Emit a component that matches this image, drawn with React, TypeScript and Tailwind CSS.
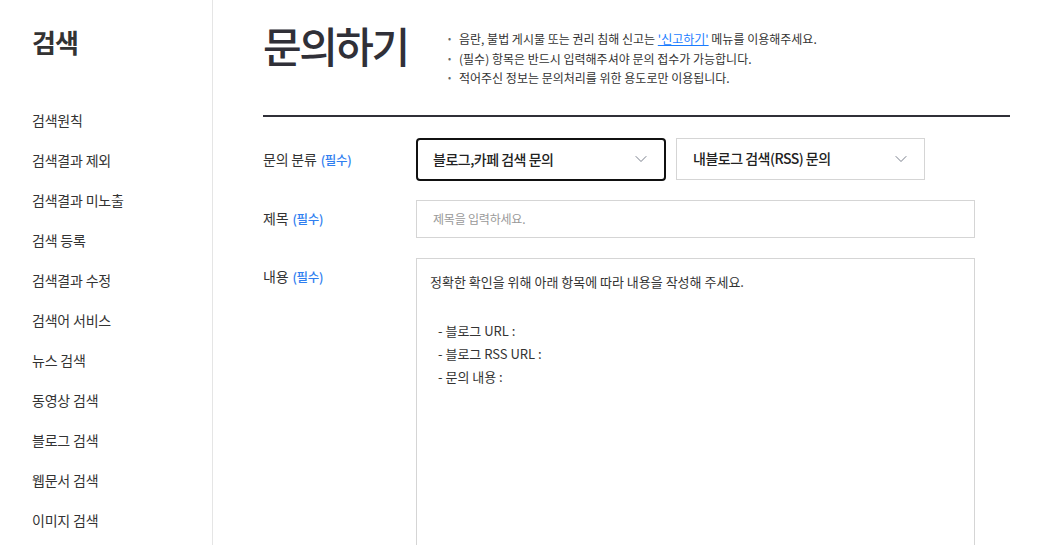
import { ChevronDown } from 'lucide-react'

const menu = [
    '검색원칙',
    '검색결과 제외',
    '검색결과 미노출',
    '검색 등록',
    '검색결과 수정',
    '검색어 서비스',
    '뉴스 검색',
    '동영상 검색',
    '블로그 검색',
    '웹문서 검색',
    '이미지 검색',
]

function Required() {
    return <span className="ml-1 text-[12.5px] font-medium tracking-[-0.3px] text-[#2f7ef0]">(필수)</span>
}

function Select({ label, active }: { label: string; active?: boolean }) {
    return (
        <div
            className={
                active
                    ? 'flex h-[43px] w-[250px] items-center justify-between rounded-[4px] border-2 border-[#111] pl-[15px] pr-[13px]'
                    : 'flex h-[42px] w-[249px] items-center justify-between border border-[#d5d5d5] pl-[16px] pr-[13px]'
            }
        >
            <span className="text-[14px] font-medium tracking-[-0.5px] text-[#222]">{label}</span>
            <ChevronDown className="h-[20px] w-[20px] text-[#6b7280]" strokeWidth={1.1} />
        </div>
    )
}

export default function App() {
    return (
        <div
            className="flex h-[545px] w-full overflow-hidden bg-white text-[#333]"
            style={{ fontFamily: '"Noto Sans CJK KR", "Noto Sans", sans-serif' }}
        >
            <aside className="w-[213px] shrink-0 border-r border-[#e5e5e5] pl-[32px] pt-[22px]">
                <h2 className="text-[26px] font-bold tracking-[-1px] text-[#333]">검색</h2>
                <ul className="mt-[49px]">
                    {menu.map((item) => (
                        <li key={item} className="h-[40px] text-[14px] tracking-[-0.2px] text-[#333]">
                            {item}
                        </li>
                    ))}
                </ul>
            </aside>

            <main className="w-[747px] shrink-0 pl-[50px] pt-[17px]">
                <div className="w-[747px]">
                    <div className="flex items-start border-b-2 border-[#303038] pb-[27px]">
                        <h1 className="w-[185px] text-[42px] font-medium leading-[56px] tracking-[-2.5px] text-[#303038]">
                            문의하기
                        </h1>
                        <ul className="mt-[12px] text-[12px] leading-[19.5px] tracking-[0px] text-[#333]">
                            <li className="flex">
                                <span className="w-[11px] text-[9px] text-[#666]">•</span>
                                음란, 불법 게시물 또는 권리 침해 신고는&nbsp;
                                <a className="text-[#1a7cff] underline">'신고하기'</a>&nbsp;메뉴를 이용해주세요.
                            </li>
                            <li className="flex">
                                <span className="w-[11px] text-[9px] text-[#666]">•</span>
                                (필수) 항목은 반드시 입력해주셔야 문의 접수가 가능합니다.
                            </li>
                            <li className="flex">
                                <span className="w-[11px] text-[9px] text-[#666]">•</span>
                                적어주신 정보는 문의처리를 위한 용도로만 이용됩니다.
                            </li>
                        </ul>
                    </div>

                    <div className="mt-[21px] flex flex-col">
                        <div className="flex items-center">
                            <div className="w-[153px] text-[14px] tracking-[-0.2px]">
                                문의 분류<Required />
                            </div>
                            <div className="flex gap-[10px]">
                                <Select label="블로그,카페 검색 문의" active />
                                <Select label="내블로그 검색(RSS) 문의" />
                            </div>
                        </div>

                        <div className="mt-[19px] flex items-center">
                            <div className="w-[153px] text-[14px] tracking-[-0.2px]">
                                제목<Required />
                            </div>
                            <div className="flex h-[38px] w-[559px] items-center border border-[#d5d5d5] pl-[16px] text-[12px] tracking-[-0.2px] text-[#999]">
                                제목을 입력하세요.
                            </div>
                        </div>

                        <div className="mt-[20px] flex items-start">
                            <div className="w-[153px] pt-[8px] text-[14px] tracking-[-0.2px]">
                                내용<Required />
                            </div>
                            <div className="h-[320px] w-[559px] border border-[#d5d5d5] pl-[13px] pt-[11px] text-[13px] leading-[23px] tracking-[0px] text-[#333]">
                                <p>정확한 확인을 위해 아래 항목에 따라 내용을 작성해 주세요.</p>
                                <p>&nbsp;</p>
                                <div className="mt-[3px] pl-[8px]">
                                    <p>- 블로그 URL :</p>
                                    <p>- 블로그 RSS URL :</p>
                                    <p>- 문의 내용 :</p>
                                </div>
                            </div>
                        </div>
                    </div>
                </div>
            </main>
        </div>
    )
}
